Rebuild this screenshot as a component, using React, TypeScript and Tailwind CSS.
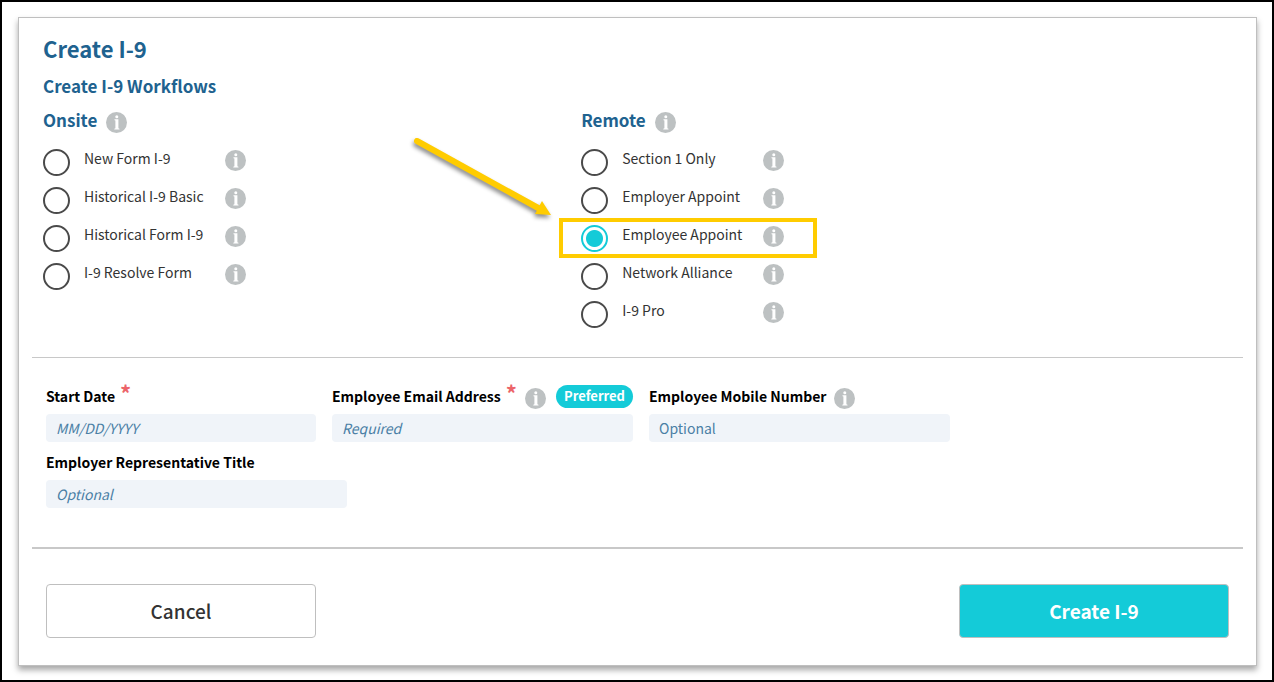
import { useState } from 'react';
import type { ReactNode } from 'react';
import { clsx } from 'clsx';

const onsiteWorkflows = [
  { id: 'new', label: 'New Form I-9' },
  { id: 'historical-basic', label: 'Historical I-9 Basic' },
  { id: 'historical-form', label: 'Historical Form I-9' },
  { id: 'resolve', label: 'I-9 Resolve Form' },
];

const remoteWorkflows = [
  { id: 'section-1', label: 'Section 1 Only' },
  { id: 'employer-appoint', label: 'Employer Appoint' },
  { id: 'employee-appoint', label: 'Employee Appoint' },
  { id: 'network', label: 'Network Alliance' },
  { id: 'pro', label: 'I-9 Pro' },
];

function InfoIcon() {
  return (
    <svg viewBox="0 0 21 21" className="h-[21px] w-[21px] shrink-0" aria-hidden="true">
      <circle cx="10.5" cy="10.5" r="10.5" fill="#bdc1c2" />
      <circle cx="10.8" cy="4.8" r="1.5" fill="#fff" />
      <path d="M8.5 7.3h3.9v8.9l1.1.5v.8H8.3v-.8l1.1-.5V8.6l-.9-.4z" fill="#fff" />
    </svg>
  );
}

function Arrow() {
  return (
    <svg
      viewBox="0 0 150 90"
      className="pointer-events-none absolute right-full bottom-full h-[90px] w-[150px] overflow-visible drop-shadow-[-1px_3px_2px_rgba(0,0,0,0.45)]"
      aria-hidden="true"
    >
      <path d="M4 9 L127 77" stroke="#ffcc00" strokeWidth="6" strokeLinecap="round" />
      <path d="M138 83 L129 69 L122 82 Z" fill="#ffcc00" />
    </svg>
  );
}

type WorkflowListProps = {
  title: string;
  items: { id: string; label: string }[];
  selected: string;
  highlighted?: string;
  onSelect: (id: string) => void;
};

function WorkflowList({ title, items, selected, highlighted, onSelect }: WorkflowListProps) {
  return (
    <section>
      <h3 className="flex h-6 items-center gap-[9px] text-[17px] font-bold text-[#20628f]">
        {title}
        <span className="pt-1">
          <InfoIcon />
        </span>
      </h3>
      <ul className="mt-[11px]">
        {items.map((item) => (
          <li key={item.id} className="relative flex h-[38px] items-center">
            <input
              type="radio"
              id={item.id}
              name="workflow"
              checked={selected === item.id}
              onChange={() => onSelect(item.id)}
              className="h-[27px] w-[27px] shrink-0 appearance-none rounded-full border-2 border-[#4a4a4a] bg-white checked:border-[#14cbd8] checked:bg-[radial-gradient(circle,#14cbd8_8px,transparent_9px)]"
            />
            <label htmlFor={item.id} className="w-[155px] pb-2 pl-[14px] text-sm text-[#333]">
              {item.label}
            </label>
            <span className="pb-1">
              <InfoIcon />
            </span>
            {highlighted === item.id && (
              <div className="pointer-events-none absolute -top-px -left-[22px] h-10 w-[258px] border-4 border-[#ffcc00]">
                <Arrow />
              </div>
            )}
          </li>
        ))}
      </ul>
    </section>
  );
}

type FieldProps = {
  id: string;
  label: string;
  placeholder: string;
  width: string;
  italic?: boolean;
  required?: boolean;
  children?: ReactNode;
};

function Field({ id, label, placeholder, width, italic = true, required, children }: FieldProps) {
  return (
    <div className={width}>
      <div className="flex h-6 items-center">
        <label htmlFor={id} className="text-sm font-bold whitespace-nowrap text-black">
          {label}
        </label>
        {required && <span className="pb-2 pl-[5px] text-[22px] leading-4 font-bold text-[#ec6469]">*</span>}
        {children}
      </div>
      <input
        id={id}
        type="text"
        placeholder={placeholder}
        className={clsx(
          'mt-[6px] h-7 w-full rounded bg-[#f0f4f9] px-[10px] text-sm placeholder:text-[#4a7fa5]',
          italic && 'italic',
        )}
      />
    </div>
  );
}

export default function App() {
  const [workflow, setWorkflow] = useState('employee-appoint');

  return (
    <main className="min-h-screen border-2 border-black bg-white pt-[15px] pr-[15px] pb-[14px] pl-4 font-['Noto_Sans_CJK_SC','Source_Sans_Pro',sans-serif]">
      <form
        onSubmit={(e) => e.preventDefault()}
        className="border border-[#bfbfbf] bg-white px-[13px] pb-[27px] shadow-[0_4px_6px_rgba(0,0,0,0.35)]"
      >
        <div className="px-[11px] pt-[14px] text-[#20628f]">
          <h1 className="text-[22px] leading-8 font-bold">Create I-9</h1>
          <h2 className="mt-[10px] text-[17px] leading-6 font-bold">Create I-9 Workflows</h2>
        </div>

        {/* Workflow choice */}
        <div className="mt-[10px] grid grid-cols-[45%_1fr] border-b border-[#c8c8c8] pr-1 pb-6 pl-[11px]">
          <WorkflowList title="Onsite" items={onsiteWorkflows} selected={workflow} onSelect={setWorkflow} />
          <WorkflowList
            title="Remote"
            items={remoteWorkflows}
            selected={workflow}
            highlighted="employee-appoint"
            onSelect={setWorkflow}
          />
        </div>

        {/* Employee details */}
        <div className="flex flex-wrap gap-x-4 gap-y-2 border-b-2 border-[#c8c8c8] px-[14px] pt-[26px] pb-[39px]">
          <Field id="start-date" label="Start Date" placeholder="MM/DD/YYYY" width="w-[270px]" required />
          <Field id="email" label="Employee Email Address" placeholder="Required" width="w-[301px]" required>
            <span className="pt-1 pl-2">
              <InfoIcon />
            </span>
            <span className="ml-auto flex h-[23px] items-center rounded-full bg-[#14cbd8] px-2 text-[13px] font-bold text-white">
              Preferred
            </span>
          </Field>
          <Field
            id="mobile"
            label="Employee Mobile Number"
            placeholder="Optional"
            width="w-[301px]"
            italic={false}
          >
            <span className="pt-1 pl-2">
              <InfoIcon />
            </span>
          </Field>
          <div className="w-full">
            <Field id="rep-title" label="Employer Representative Title" placeholder="Optional" width="w-[301px]" />
          </div>
        </div>

        {/* Actions */}
        <div className="flex justify-between px-[14px] pt-[35px]">
          <button
            type="button"
            className="h-[54px] w-[270px] rounded border border-[#bfbfbf] bg-white text-[19px] font-medium text-[#333]"
          >
            Cancel
          </button>
          <button
            type="submit"
            className="h-[54px] w-[270px] rounded border border-[#bfbfbf] bg-[#14cbd8] text-[19px] font-bold text-white"
          >
            Create I-9
          </button>
        </div>
      </form>
    </main>
  );
}
